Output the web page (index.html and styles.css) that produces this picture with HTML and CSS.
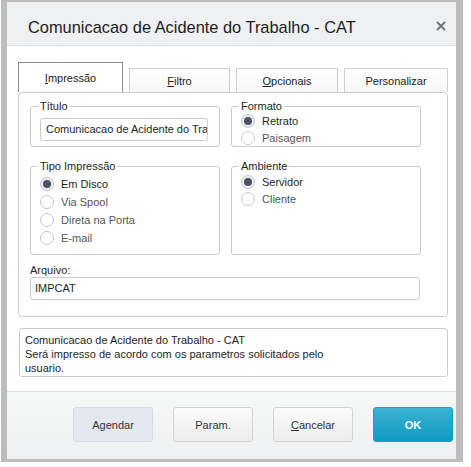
FILE: index.html
```html
<!DOCTYPE html>
<html lang="pt">
<head>
<meta charset="utf-8">
<title>Comunicacao de Acidente do Trabalho - CAT</title>
<link rel="stylesheet" href="styles.css">
</head>
<body>
<div class="frame">
  <div class="dialog">
    <header class="header">
      <h1 class="title">Comunicacao de Acidente do Trabalho - CAT</h1>
      <span class="close" aria-label="Fechar">
        <svg width="10" height="10" viewBox="0 0 10 10"><path d="M1 1 L9 9 M9 1 L1 9" stroke="#707070" stroke-width="1.8" fill="none"/></svg>
      </span>
    </header>
    <main class="body">
      <nav class="tabs">
        <div class="tab tab-active w1"><u>I</u>mpressão</div>
        <div class="tab w2"><u>F</u>iltro</div>
        <div class="tab w3"><u>O</u>pcionais</div>
        <div class="tab w4">Personalizar</div>
      </nav>
      <section class="panel">
        <div class="grid">
          <fieldset class="group">
            <legend>Título</legend>
            <div class="input title-input">Comunicacao de Acidente do Trabalho - CAT</div>
          </fieldset>
          <fieldset class="group">
            <legend>Formato</legend>
            <div class="radios r17">
              <div class="radio on"><span class="dot"></span><span class="lbl">Retrato</span></div>
              <div class="radio"><span class="dot"></span><span class="lbl">Paisagem</span></div>
            </div>
          </fieldset>
          <fieldset class="group">
            <legend>Tipo Impressão</legend>
            <div class="radios r18">
              <div class="radio on"><span class="dot"></span><span class="lbl">Em Disco</span></div>
              <div class="radio"><span class="dot"></span><span class="lbl">Via Spool</span></div>
              <div class="radio"><span class="dot"></span><span class="lbl">Direta na Porta</span></div>
              <div class="radio"><span class="dot"></span><span class="lbl">E-mail</span></div>
            </div>
          </fieldset>
          <fieldset class="group">
            <legend>Ambiente</legend>
            <div class="radios r17 amb">
              <div class="radio on"><span class="dot"></span><span class="lbl">Servidor</span></div>
              <div class="radio"><span class="dot"></span><span class="lbl">Cliente</span></div>
            </div>
          </fieldset>
        </div>
        <div class="file-label">Arquivo:</div>
        <div class="input file-input">IMPCAT</div>
      </section>
      <div class="desc">
        Comunicacao de Acidente do Trabalho - CAT<br>
        Será impresso de acordo com os parametros solicitados pelo<br>
        usuario.
      </div>
    </main>
    <footer class="footer">
      <button class="btn btn-sched">Agendar</button>
      <button class="btn">Param.</button>
      <button class="btn"><u>C</u>ancelar</button>
      <button class="btn btn-ok">OK</button>
    </footer>
  </div>
</div>
</body>
</html>
```
FILE: styles.css
```css
html, body {
  margin: 0;
  padding: 0;
  background: #ffffff;
}
body {
  width: 471px;
  height: 467px;
  font-family: "Liberation Sans", Arial, sans-serif;
  font-size: 11px;
  color: #222;
}
.frame {
  margin-left: 1px;
  width: 449px;
  height: 457px;
  border-style: solid;
  border-color: #bdbdbd;
  border-width: 2px 7px 3px 6px;
}
.dialog {
  display: flex;
  flex-direction: column;
  height: 100%;
  background: #fff;
}
.header {
  box-sizing: border-box;
  height: 44px;
  background: #eef0f1;
  border-bottom: 1px solid #dcdfe1;
  display: flex;
  align-items: flex-start;
  justify-content: space-between;
  padding: 15px 10px 0 21px;
}
.title {
  margin: 0;
  font-size: 16.4px;
  line-height: 20px;
  font-weight: normal;
  color: #1e1e1e;
}
.close {
  display: flex;
  margin-top: 4px;
}
.body {
  height: 345px;
  box-sizing: border-box;
  padding: 16px 0 0 11px;
}
.tabs {
  display: flex;
  align-items: flex-end;
  gap: 6px;
  height: 30px;
}
.tab {
  box-sizing: border-box;
  height: 24px;
  border: 1px solid #cfcfcf;
  border-bottom: none;
  background: linear-gradient(#ffffff, #f7f7f7);
  text-align: center;
  line-height: 25px;
  color: #222;
}
.tab-active {
  height: 30px;
  border-color: #8d8d8d;
  background: #fff;
  padding-top: 6px;
  line-height: 19px;
}
.w1 { width: 105px; }
.w2 { width: 101px; }
.w3 { width: 102px; }
.w4 { width: 104px; }
.panel {
  box-sizing: border-box;
  width: 430px;
  height: 225px;
  border: 1px solid #cccccc;
  border-radius: 4px;
  padding: 6px 27px 0 11px;
}
.grid {
  display: grid;
  grid-template-columns: 190px 190px;
  column-gap: 11px;
  row-gap: 12px;
}
.group {
  margin: 0;
  min-width: 0;
  border: 1px solid #c9c9c9;
  border-radius: 3px;
  padding: 0 11px 0 9px;
}
.group legend {
  margin-left: -2px;
  padding: 0 2px;
  line-height: 14px;
  color: #1e1e1e;
}
.input {
  box-sizing: border-box;
  height: 23px;
  border: 1px solid #cccccc;
  border-radius: 3px;
  line-height: 21px;
  white-space: nowrap;
  overflow: hidden;
  color: #1e1e1e;
  background: #fff;
}
.title-input {
  margin: 5px 0 5px;
  padding-left: 5px;
}
.radios {
  display: flex;
  flex-direction: column;
}
.r17 { margin-top: -1px; }
.r17 .radio { height: 17px; }
.r17.amb { margin-top: 0; }
.r18 { margin-top: 2px; padding-bottom: 7px; }
.r18 .radio { height: 18px; }
.radio {
  display: flex;
  align-items: center;
  gap: 7px;
  line-height: 14px;
  color: #555;
}
.radio.on { color: #1e1e1e; }
.dot {
  box-sizing: border-box;
  flex: none;
  width: 14px;
  height: 14px;
  border-radius: 50%;
  border: 1px solid #c8c8c8;
  background: #fff;
  display: flex;
  align-items: center;
  justify-content: center;
}
.radio.on .dot {
  background: #ececec;
}
.radio.on .dot::after {
  content: "";
  width: 8px;
  height: 8px;
  border-radius: 50%;
  background: #4a5366;
}
.file-label {
  margin-top: 8px;
  line-height: 14px;
  color: #1e1e1e;
}
.file-input {
  width: 390px;
  padding-left: 4px;
}
.desc {
  box-sizing: border-box;
  margin: 11px 0 0 1px;
  width: 429px;
  height: 49px;
  border: 1px solid #cccccc;
  border-radius: 3px;
  padding: 4px 5px 0;
  line-height: 14px;
  color: #1e1e1e;
}
.footer {
  flex: 1;
  border-top: 1px solid #dcdfe1;
  background: linear-gradient(#f6f7f7, #eff0f1);
  display: flex;
  justify-content: flex-end;
  align-items: flex-start;
  gap: 20px;
  padding: 15px 3px 0 0;
}
.btn {
  box-sizing: border-box;
  width: 80px;
  height: 35px;
  border: 1px solid #d3d3d3;
  border-radius: 3px;
  background: linear-gradient(#fbfbfb, #ececec);
  font-family: "Liberation Sans", Arial, sans-serif;
  font-size: 11px;
  color: #333;
  padding: 0;
}
.btn-sched {
  background: #e4e8f0;
  border-color: #d6dae2;
}
.btn-ok {
  background: linear-gradient(#3cb1d3, #0f9bc0);
  border-color: #1c9fc3;
  color: #fff;
  font-weight: bold;
}
```
